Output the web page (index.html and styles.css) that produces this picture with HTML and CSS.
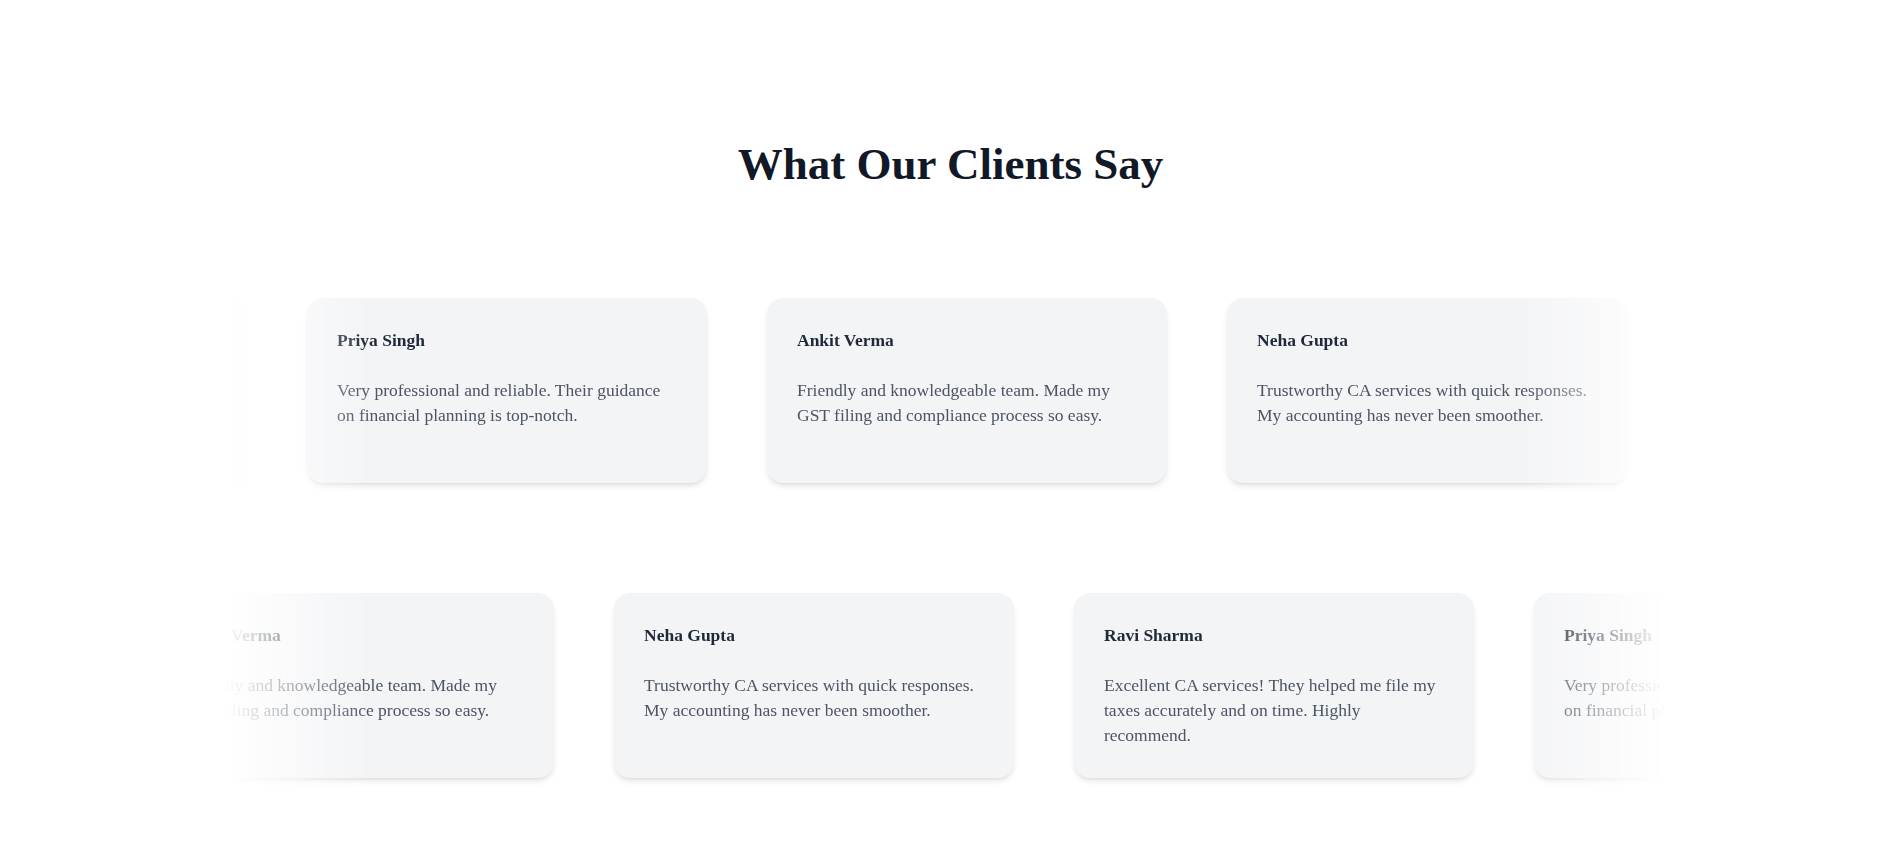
FILE: index.html
```html
<!DOCTYPE html>
<html lang="en">
<head>
<meta charset="utf-8">
<title>What Our Clients Say</title>
<link rel="stylesheet" href="styles.css">
</head>
<body>
<section class="testimonials">
  <h2 class="title">What Our Clients Say</h2>
  <div class="marquee">
    <div class="row">
      <div class="track track-a">
        <div class="card"><h3 class="name">Ravi Sharma</h3><p class="quote">Excellent CA services! They helped me file my taxes accurately and on time. Highly recommend.</p></div>
        <div class="card"><h3 class="name">Priya Singh</h3><p class="quote">Very professional and reliable. Their guidance on financial planning is top-notch.</p></div>
        <div class="card"><h3 class="name">Ankit Verma</h3><p class="quote">Friendly and knowledgeable team. Made my GST filing and compliance process so easy.</p></div>
        <div class="card"><h3 class="name">Neha Gupta</h3><p class="quote">Trustworthy CA services with quick responses. My accounting has never been smoother.</p></div>
        <div class="card"><h3 class="name">Ravi Sharma</h3><p class="quote">Excellent CA services! They helped me file my taxes accurately and on time. Highly recommend.</p></div>
      </div>
    </div>
    <div class="row">
      <div class="track track-b">
        <div class="card"><h3 class="name">Ankit Verma</h3><p class="quote">Friendly and knowledgeable team. Made my GST filing and compliance process so easy.</p></div>
        <div class="card"><h3 class="name">Neha Gupta</h3><p class="quote">Trustworthy CA services with quick responses. My accounting has never been smoother.</p></div>
        <div class="card"><h3 class="name">Ravi Sharma</h3><p class="quote">Excellent CA services! They helped me file my taxes accurately and on time. Highly recommend.</p></div>
        <div class="card"><h3 class="name">Priya Singh</h3><p class="quote">Very professional and reliable. Their guidance on financial planning is top-notch.</p></div>
      </div>
    </div>
  </div>
</section>
</body>
</html>
```
FILE: styles.css
```css
html, body {
  margin: 0;
  padding: 0;
  background: #ffffff;
}

body {
  font-family: "Liberation Serif", "Times New Roman", serif;
}

.testimonials {
  padding-top: 137px;
  padding-bottom: 40px;
}

.title {
  margin: 0;
  padding-left: 9px;
  text-align: center;
  font-size: 45px;
  line-height: 54px;
  font-weight: 700;
  color: #111827;
}

.marquee {
  max-width: 1440px;
  margin: 83px auto 0;
  overflow: hidden;
  display: flex;
  flex-direction: column;
  gap: 62px;
  -webkit-mask-image: linear-gradient(to right, transparent 0%, #000 10%, #000 90%, transparent 100%);
  mask-image: linear-gradient(to right, transparent 0%, #000 10%, #000 90%, transparent 100%);
}

.row {
  padding: 24px 0;
}

.track {
  display: flex;
  gap: 60px;
  width: max-content;
}

.track-a {
  transform: translateX(-379px);
}

.track-b {
  transform: translateX(-72px);
}

.card {
  flex: 0 0 400px;
  box-sizing: border-box;
  padding: 30px;
  background: #f3f4f6;
  border-radius: 16px;
  box-shadow: 0 4px 6px -1px rgba(0, 0, 0, 0.1), 0 2px 4px -2px rgba(0, 0, 0, 0.1);
}

.name {
  margin: 0 0 25px;
  font-size: 17.5px;
  line-height: 25px;
  font-weight: 700;
  color: #1f2937;
}

.quote {
  margin: 0;
  font-size: 17.5px;
  line-height: 25px;
  color: #4b5563;
}
```
